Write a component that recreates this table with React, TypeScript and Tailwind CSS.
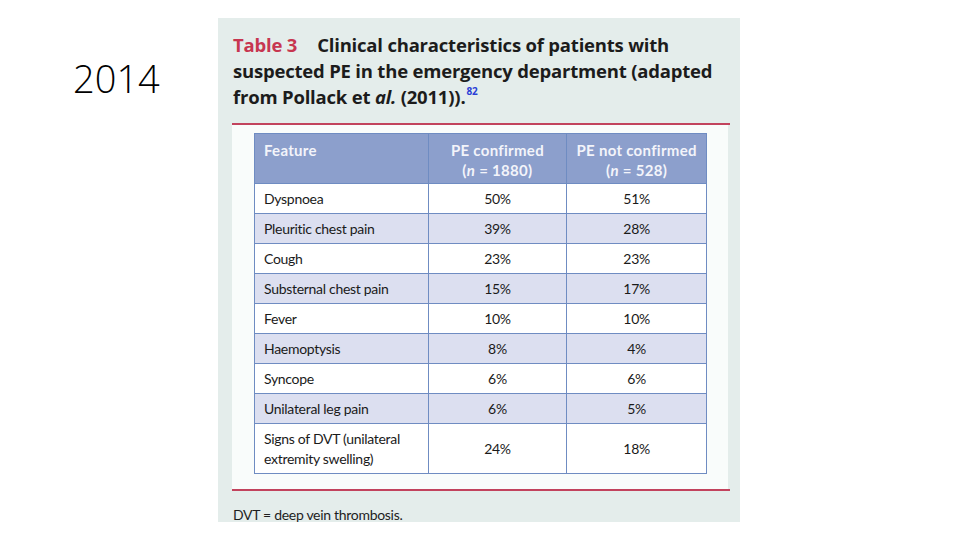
const rows = [
  { feature: "Dyspnoea", a: "50%", b: "51%" },
  { feature: "Pleuritic chest pain", a: "39%", b: "28%" },
  { feature: "Cough", a: "23%", b: "23%" },
  { feature: "Substernal chest pain", a: "15%", b: "17%" },
  { feature: "Fever", a: "10%", b: "10%" },
  { feature: "Haemoptysis", a: "8%", b: "4%" },
  { feature: "Syncope", a: "6%", b: "6%" },
  { feature: "Unilateral leg pain", a: "6%", b: "5%" },
];

export default function App() {
  return (
    <div className="w-[960px] h-[540px] bg-white flex overflow-hidden" style={{ fontFamily: "Lato, 'Open Sans', sans-serif" }}>
      {/* year label */}
      <div className="w-[218px] shrink-0 pl-[73px] pt-[54px]">
        <div className="text-[38px] leading-[48px] font-light text-black" style={{ fontFamily: "'Open Sans', sans-serif" }}>
          2014
        </div>
      </div>

      {/* scanned table panel */}
      <div className="mt-[18px] w-[522px] h-[504px] shrink-0 bg-[#e4edeb] overflow-hidden">
        <div
          className="pl-[15px] pt-[14px] text-[18.5px] leading-[26px] font-bold text-[#1c1c1c] tracking-[-0.2px] whitespace-nowrap"
          style={{ fontFamily: "'Open Sans', sans-serif" }}
        >
          <div>
            <span className="text-[#c73650]">Table 3</span>
            <span className="ml-[20px]">Clinical characteristics of patients with</span>
          </div>
          <div>suspected PE in the emergency department (adapted</div>
          <div>
            from Pollack et <i>al.</i> (2011)).
            <sup className="text-[10px] text-[#2b3fd6] ml-[1px] -top-[9px]">82</sup>
          </div>
        </div>

        <div className="mt-[13px] ml-[14px] w-[498px] h-[2px] bg-[#c2435d]" />
        <div className="ml-[14px] w-[496px] h-[364px] bg-[#f9fcfb] pl-[22px] pt-[8px]">
          <table className="w-[453px] border-collapse text-[14px] text-[#1a1a1a] tracking-[-0.3px]">
            <colgroup>
              <col className="w-[174px]" />
              <col className="w-[139px]" />
              <col className="w-[140px]" />
            </colgroup>
            <thead>
              <tr className="bg-[#8c9fcc] text-[#f3f4fa] h-[50px] text-[15px]">
                <th className="border border-[#6f8cc2] text-left align-top pl-[9px] pt-[6px] font-bold leading-[20px] tracking-[0.3px]">Feature</th>
                <th className="border border-[#6f8cc2] align-top pt-[6px] font-bold leading-[20px] tracking-[0.3px]">
                  PE confirmed
                  <br />(<i>n</i> = 1880)
                </th>
                <th className="border border-[#6f8cc2] align-top pt-[6px] font-bold leading-[20px] tracking-[0.3px]">
                  PE not confirmed
                  <br />(<i>n</i> = 528)
                </th>
              </tr>
            </thead>
            <tbody>
              {rows.map((r, i) => (
                <tr key={r.feature} className={i % 2 === 1 ? "bg-[#dcdff0] h-[30px]" : "bg-white h-[30px]"}>
                  <td className="border border-[#6f8cc2] pl-[9px]">{r.feature}</td>
                  <td className="border border-[#6f8cc2] text-center">{r.a}</td>
                  <td className="border border-[#6f8cc2] text-center">{r.b}</td>
                </tr>
              ))}
              <tr className="bg-white h-[50px]">
                <td className="border border-[#6f8cc2] pl-[9px] leading-[20px]">
                  Signs of DVT (unilateral
                  <br />extremity swelling)
                </td>
                <td className="border border-[#6f8cc2] text-center">24%</td>
                <td className="border border-[#6f8cc2] text-center">18%</td>
              </tr>
            </tbody>
          </table>
        </div>
        <div className="ml-[14px] w-[498px] h-[2px] bg-[#c2435d]" />

        <div className="pl-[15px] pt-[15px] text-[14px] leading-[18px] text-[#1e1e1e] tracking-[-0.3px]">
          DVT = deep vein thrombosis.
        </div>
      </div>
    </div>
  );
}
